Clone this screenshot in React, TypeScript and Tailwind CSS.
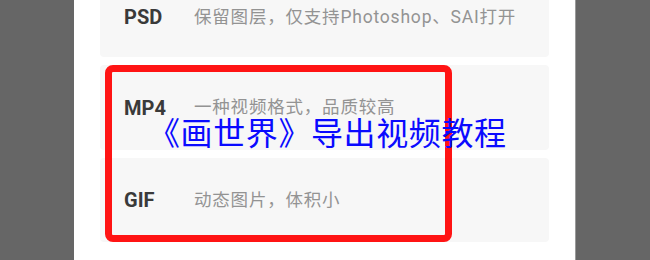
import React from "react";

const rows = [
  { label: "PSD", desc: "保留图层，仅支持Photoshop、SAI打开", h: "h-[80px]" },
  { label: "MP4", desc: "一种视频格式，品质较高", h: "h-[85px]" },
  { label: "GIF", desc: "动态图片，体积小", h: "h-[84px]" },
];

export default function App() {
  return (
    <div className="relative w-[650px] h-[260px] overflow-hidden bg-[#666666] flex justify-center">
      <div className="w-[502px] h-full bg-white px-[26px] border-r border-[#9a9a9a]">
        <div className="mt-[-23px] flex flex-col gap-[8px]">
          {rows.map((r) => (
            <div
              key={r.label}
              className={`${r.h} rounded-[4px] bg-[#f7f7f7] flex items-center pl-[24px]`}
            >
              <span className="w-[70px] shrink-0 text-[20px] font-bold text-[#3a3a3a] [font-family:Roboto,'Noto_Sans_CJK_SC',sans-serif]">
                {r.label}
              </span>
              <span className="text-[17.5px] tracking-[0.8px] text-[#939393] [font-family:Roboto,'Noto_Sans_CJK_SC',sans-serif]">
                {r.desc}
              </span>
            </div>
          ))}
        </div>
      </div>
      <div className="absolute left-[105px] top-[65px] w-[347px] h-[177px] border-[7px] border-[#ff1414] rounded-[8px]" />
      <div className="absolute left-[148px] top-[112px] text-[32px] leading-[38px] tracking-[0.6px] text-[#0a0aff] whitespace-nowrap [font-family:'Noto_Sans_CJK_SC',sans-serif]">
        《画世界》导出视频教程
      </div>
    </div>
  );
}
